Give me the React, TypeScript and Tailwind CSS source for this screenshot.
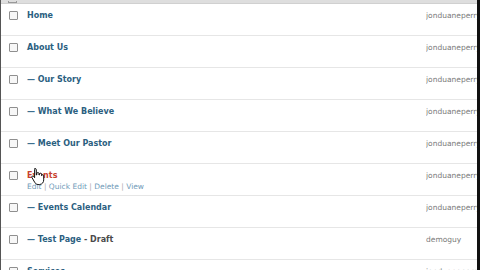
import React from "react";

type Page = {
  title: string;
  child?: boolean;
  author: string;
  draft?: boolean;
  hover?: boolean;
};

const pages: Page[] = [
  { title: "Home", author: "jonduaneperry" },
  { title: "About Us", author: "jonduaneperry" },
  { title: "Our Story", child: true, author: "jonduaneperry" },
  { title: "What We Believe", child: true, author: "jonduaneperry" },
  { title: "Meet Our Pastor", child: true, author: "jonduaneperry" },
  { title: "Events", author: "jonduaneperry", hover: true },
  { title: "Events Calendar", child: true, author: "jonduaneperry" },
  { title: "Test Page", child: true, author: "demoguy", draft: true },
  { title: "Services", author: "jonduaneperry" },
];

const Checkbox = () => (
  <span className="block w-[9px] h-[9px] shrink-0 border border-[#8f8f8f] bg-[#f7f7f7] rounded-[1px]" />
);

const Cursor = () => (
  <svg className="absolute left-[30px] top-[167px]" width="14" height="18" viewBox="0 0 14 18">
    <path
      d="M4 1.5c.8 0 1.3.5 1.3 1.3V8l.5-.1V6.6c0-.7.5-1.1 1.1-1.1s1.1.4 1.1 1.1V8l.4 0V7.2c0-.6.5-1 1.1-1s1 .4 1 1V8.6l.3 0c0-.5.4-.9 1-.9s.9.4.9 1v4.2c0 2.3-1.5 4.6-4.2 4.6H7.1c-1.6 0-2.5-.8-3.4-2.2L1 10.7c-.4-.6-.3-1.2.2-1.5.5-.3 1.1-.2 1.5.3l.9 1.2V2.8C3.6 2 3.2 1.5 4 1.5z"
      fill="#fff"
      stroke="#111"
      strokeWidth="1"
    />
  </svg>
);

const Row = ({ page }: { page: Page }) => (
  <div className="h-[32px] border-b border-[#e6e6e6] flex items-start pt-[7px] pl-[8px]">
    <div className="pt-[0px]">
      <Checkbox />
    </div>
    <div className="flex-1 ml-[9px] leading-[10px]">
      <div className="text-[8px] font-bold">
        {page.child && <span className="text-[#3d6f8f]">— </span>}
        <span className={page.hover ? "text-[#c8412e]" : "text-[#2b607f]"}>{page.title}</span>
        {page.draft && <span className="text-[#4a4a4a]"> - Draft</span>}
      </div>
      {page.hover && (
        <div className="text-[7.5px] mt-[1px] text-[#6f9ab8] whitespace-nowrap">
          Edit<span className="text-[#aaa]"> | </span>Quick Edit<span className="text-[#aaa]"> | </span>Delete
          <span className="text-[#aaa]"> | </span>View
        </div>
      )}
    </div>
    <div className="w-[51px] overflow-hidden whitespace-nowrap text-[7.5px] leading-[10px] text-[#7a7a7a]">
      {page.author}
    </div>
  </div>
);

export default function App() {
  return (
    <div className="w-[480px] h-[270px] overflow-hidden flex bg-white font-['DejaVu_Sans',sans-serif]">
      <div className="w-[1px] bg-[#555]" />
      <div className="flex-1 relative">
        <div className="h-[4px] bg-[#dedede] border-b border-[#d0d0d0] pl-[7px] flex items-end">
          <span className="block w-[9px] h-[2px] border-x border-b border-[#999]" />
        </div>
        {pages.map((p) => (
          <Row key={p.title} page={p} />
        ))}
        <Cursor />
      </div>
      <div className="w-[3px] bg-[#111]" />
    </div>
  );
}
